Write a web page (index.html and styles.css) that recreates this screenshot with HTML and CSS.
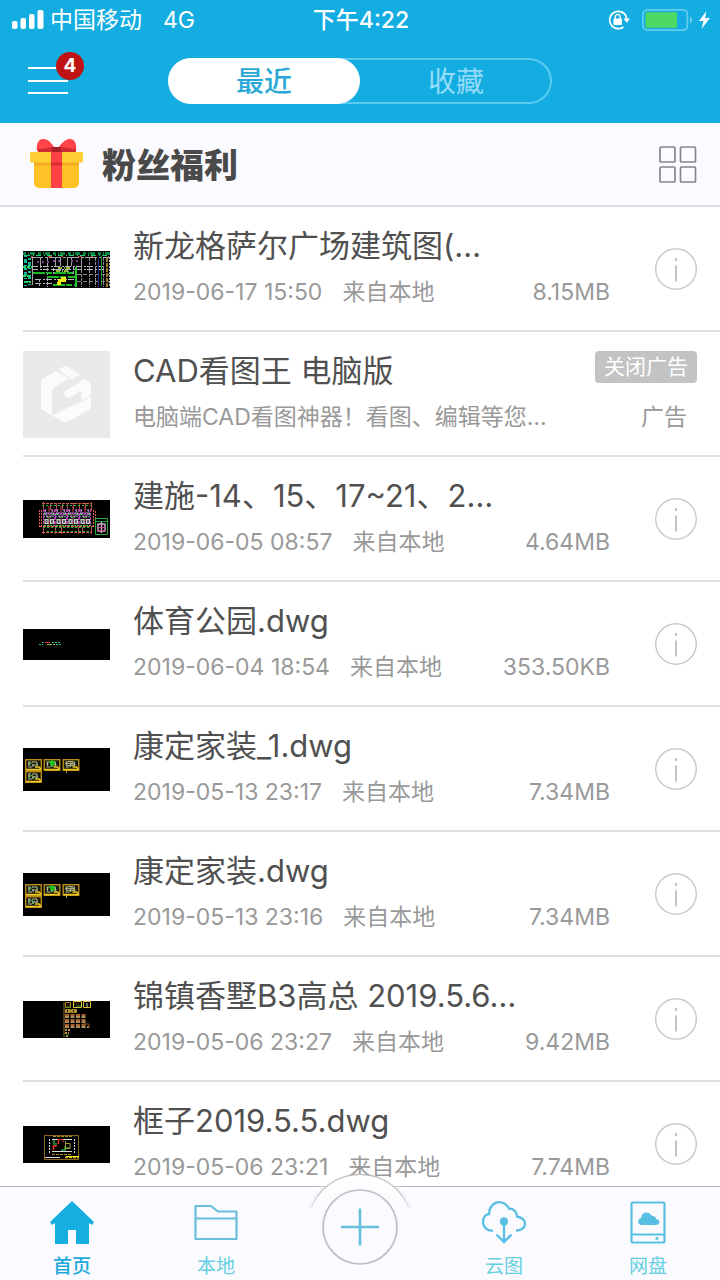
FILE: index.html
```html
<!DOCTYPE html>
<html lang="zh-CN">
<head>
<meta charset="utf-8">
<meta name="viewport" content="width=device-width, initial-scale=1">
<title>CAD看图王</title>
<link rel="stylesheet" href="styles.css">
</head>
<body>
<svg class="defs" aria-hidden="true">
  <symbol id="info" viewBox="0 0 42 42">
    <circle cx="21" cy="21" r="20.3" fill="none" stroke="#c8c8c8" stroke-width="1.4"/>
    <path d="M21 10v3M21 17.500v16" stroke="#bdbdbd" stroke-width="1.8"/>
  </symbol>
  <symbol id="plan" viewBox="0 0 17 12">
    <rect x=".7" y=".7" width="15.600" height="10.600" fill="#15170c" stroke="#c4951a" stroke-width="1.300"/>
    <path d="M3 3h3m1 0h5M3 5h2m2 1h6M3 8h4m1-3v3M12 3v4M4 3v4" stroke="#b5bd96" stroke-width="1.100"/>
    <path d="M1 10.500h15M10 8h4l2 2" stroke="#f0c820" stroke-width="1.400" fill="none"/>
  </symbol>
  <symbol id="house-plans" viewBox="0 0 87 43">
    <rect width="87" height="43" fill="#000"/>
    <use href="#plan" x="2" y="11" width="17" height="12"/>
    <use href="#plan" x="20" y="11" width="18" height="12"/>
    <use href="#plan" x="39" y="11" width="18" height="12"/>
    <use href="#plan" x="2" y="23" width="17" height="12"/>
    <path d="M26 14h6M27 16h5M29 12v7" stroke="#18d818" stroke-width="1.300"/>
    <path d="M43.500 23v2" stroke="#b6951d"/>
    <path d="M42 15.500h10M43 17.500h9M45 13.500h5" stroke="#a9aa79"/>
    <path d="M6 17l4-3M5 29l5-2M9 31l3-3" stroke="#5dbc5c"/>
  </symbol>
  <symbol id="villa" viewBox="0 0 12 21">
    <path d="M.5 3v17M11.500 3v17" stroke="#b13e9c" stroke-dasharray="3 1"/>
    <path d="M6 0v20" stroke="#c04a55"/>
    <path d="M1 4.500h3M8 4.500h3M2 7.500h8M0 10.500h12" stroke="#8e6fd0" stroke-width="1.500" stroke-dasharray="2 1"/>
    <path d="M3 3l-2 6M9 3l2 6M4 6v5M8 6v5" stroke="#c68ac6"/>
    <path d="M2 13.500h3v4H2zM7.500 13.500h3v4h-3z" stroke="#d0d0d6" fill="#5b5564" stroke-width="1.200"/>
    <path d="M1 8.500h2M9 8.500h2M4 11.500h4M1 19.500h10" stroke="#2ed538" stroke-dasharray="2 1"/>
  </symbol>
</svg>

<div class="app">
  <header class="header">
    <div class="status">
      <div class="status-left">
        <svg class="signal" viewBox="0 0 32 20" fill="#fff" aria-hidden="true"><rect y="11" width="5.500" height="8" rx="2"/><rect x="8.500" y="8" width="5.500" height="11" rx="2"/><rect x="17" y="4" width="5.500" height="15" rx="2"/><rect x="25.500" y="0" width="6" height="19" rx="2"/></svg>
        <span class="carrier">中国移动</span>
        <span>4G</span>
      </div>
      <time class="clock">下午4:22</time>
      <div class="status-right">
        <svg class="lock" viewBox="0 0 22 20" aria-hidden="true"><path d="M15.500 3A8.700 8.700 0 1 0 15.500 17" fill="none" stroke="#fff" stroke-width="1.700"/><path d="M13.600 1.900A8.700 8.700 0 0 1 18.700 9" fill="none" stroke="#fff" stroke-width="1.700"/><path d="M15.500 8.500H22L18.700 13z" fill="#fff"/><rect x="5.500" y="8.500" width="8.500" height="6.500" rx="1" fill="#fff"/><path d="M7.300 9V6.800a2.400 2.400 0 0 1 4.800 0V9" fill="none" stroke="#fff" stroke-width="1.400"/></svg>
        <svg class="battery" viewBox="0 0 52 22" aria-hidden="true"><rect x=".9" y=".9" width="44.500" height="20.200" rx="4.500" fill="none" stroke="#65ccf0" stroke-width="1.700"/><rect x="3.500" y="3.200" width="31.500" height="15.500" rx="1.500" fill="#4cd964"/><path d="M48 7.500c3 1 3 6 0 7z" fill="#65ccf0"/></svg>
        <svg class="bolt" viewBox="0 0 11 18" fill="#fff" aria-hidden="true"><path d="M7.500 0 0 10h4.500L2.500 18 11 7H6z"/></svg>
      </div>
    </div>
    <nav class="topnav">
      <button class="menu" type="button" aria-label="菜单">
        <svg viewBox="0 0 40 28" stroke="#fff" stroke-width="2" aria-hidden="true"><path d="M0 1h40M0 14h40M0 26h40"/></svg>
        <span class="badge">4</span>
      </button>
      <div class="segment">
        <button class="segment-item active" type="button">最近</button>
        <button class="segment-item" type="button">收藏</button>
      </div>
    </nav>
  </header>

  <section class="promo">
    <svg class="gift" viewBox="0 0 53 50" aria-hidden="true">
      <path d="M4 22h45v22a5 5 0 0 1-5 5H9a5 5 0 0 1-5-5z" fill="#ffc328"/>
      <path d="M7 12C6 4 9 0 13 0c6 0 9 5 11 8h5c2-3 6-8 11-8 5 0 7 5 6 12z" fill="#ff4348"/>
      <path d="M8 10c5 0 12-2 16-2h5c5 0 11 2 17 2v3H8z" fill="#d02c34"/>
      <path d="M22 8h9v5h-9z" fill="#a81f28"/>
      <rect y="13" width="53" height="10.500" rx="1.500" fill="#ffce32"/>
      <path d="M4 23.500h45v3H4z" fill="#f5ad22"/>
      <path d="M21 13h11v36H21z" fill="#ff4145"/><path d="M21 23.500h11v3H21z" fill="#d92b31"/>
    </svg>
    <h1 class="promo-title">粉丝福利</h1>
    <button class="grid-button" type="button" aria-label="网格视图">
      <svg viewBox="0 0 38 38" fill="none" stroke="#858590" stroke-width="1.700" aria-hidden="true"><rect x="1" y="2" width="15" height="15" rx="1"/><rect x="21.500" y="2" width="15" height="15" rx="1"/><rect x="1" y="22" width="15" height="15" rx="1"/><rect x="21.500" y="22" width="15" height="15" rx="1"/></svg>
    </button>
  </section>

  <main class="list">
    <article class="row">
      <svg class="thumb" viewBox="0 0 87 37" shape-rendering="crispEdges" fill="none" aria-hidden="true">
        <rect width="87" height="37" fill="#000"/>
        <path d="M0 2h87" stroke="#078541" stroke-width="3" stroke-dasharray="3 2 1 1 5 3"/>
        <path d="M2 4h82" stroke="#19d26b" stroke-dasharray="5 3 1 2"/>
        <path d="M8 6h78" stroke="#aaa" stroke-dasharray="12 2 3 1"/>
        <path d="M8 5h78" stroke="#d23838" stroke-dasharray="2 15 4 9"/>
        <path d="M2 4v31M6 7v27" stroke="#17b8a0" stroke-width="3" stroke-dasharray="2 2 4 2 1 2"/>
        <path d="M0 16h10M0 25h8M2 31h6" stroke="#1ce055" stroke-width="2" stroke-dasharray="3 1"/>
        <path d="M9 7v27M17 7v10M24 7v9M32 6v9M37 7v8M44 7v8M48 7v8M58 6v9" stroke="#a1a1a1"/>
        <path d="M9 15h76M9 18h76M12 28h40M12 32h18" stroke="#bbb" stroke-dasharray="6 2 2 1"/>
        <path d="M14 11h13M30 10h10M48 10h8" stroke="#77409a" stroke-width="2" stroke-dasharray="2 3"/>
        <path d="M24 17v8M30 17v6M37 17v6M45 16v7M50 16v8M16 28v8M24 27v9" stroke="#b0a8c8" stroke-dasharray="3 1"/>
        <path d="M10 22h41M24 26h28M30 34h23" stroke="#1bb724" stroke-width="2" stroke-dasharray="12 1 6 2"/>
        <path d="M53 16v20" stroke="#24c436" stroke-width="2"/>
        <path d="M35 17h13M33 20h13" stroke="#91ba35" stroke-width="2" stroke-dasharray="4 2 1 1"/>
        <path d="M35 29h8M38 27h5M34 32h4" stroke="#f0ec16" stroke-width="3"/>
        <path d="M58 7v29M66 7v29M72 7v29M80 7v29" stroke="#8e8e9d" stroke-dasharray="3 1"/>
        <path d="M54 23h32M54 30h32" stroke="#888" stroke-dasharray="4 2"/>
        <path d="M75 8v28" stroke="#2c2b99"/><path d="M78 5v30" stroke="#209737"/>
        <path d="M84 7v29" stroke="#a07f2a" stroke-width="2" stroke-dasharray="4 1"/><path d="M86 6v30" stroke="#bbb" stroke-dasharray="2 1"/>
      </svg>
      <div class="row-body">
        <h2 class="title">新龙格萨尔广场建筑图(…</h2>
        <p class="meta"><span>2019-06-17 15:50</span><span>来自本地</span><span class="size">8.15MB</span></p>
      </div>
      <button class="info" type="button" aria-label="详情"><svg><use href="#info"/></svg></button>
    </article>

    <article class="row ad">
      <svg class="thumb" viewBox="0 0 87 87" aria-hidden="true">
        <rect width="87" height="87" fill="#e9e9e9"/>
        <g fill="#fbfbfb" stroke="#fbfbfb" stroke-linejoin="round">
          <path d="M18.500 31Q18.500 29 20 28L33 20.500 45 27.500 31 36 28.500 40V63.500L20 59Q18.500 58 18.500 56z"/>
          <path d="M36.500 18.500 41 16Q43 15.300 45 16L56.500 23.500 48 28z"/>
          <path d="M30 64.500 42 58.500 67.500 46.500V55Q67.500 57 66 58L46 70Q43 71.500 40 70z"/>
          <path d="M58.500 29.500 60.500 28.500 66.500 32Q67.500 33 67.500 35V44L59 48.500z"/>
          <path d="M45.500 42.500 57 36" fill="none" stroke-width="8" stroke-linecap="round"/>
        </g>
      </svg>
      <div class="row-body">
        <h2 class="title">CAD看图王 电脑版</h2>
        <p class="meta">电脑端CAD看图神器！看图、编辑等您…</p>
      </div>
      <div class="ad-side">
        <button class="close-ad" type="button">关闭广告</button>
        <span class="ad-label">广告</span>
      </div>
    </article>

    <article class="row">
      <svg class="thumb" viewBox="0 0 87 38" fill="none" aria-hidden="true">
        <rect width="87" height="38" fill="#000"/>
        <path d="M19 3.500h50M16 26.500h54M19 32.500h50" stroke="#e0604e" stroke-dasharray="3 1"/>
        <path d="M20.500 2v9M27.500 3v7M33.500 3v7M39.500 3v7M44.500 3v7M50.500 3v7M56.500 3v7M62.500 3v7M68.500 2v9M20.500 27v7M32.500 27v7M38.500 27v7M55.500 27v7M59.500 27v7M68.500 27v7" stroke="#bd4d46"/>
        <path d="M16.500 10v17M18.500 10v16M70.500 10v17M72.500 11v15" stroke="#e05c50" stroke-dasharray="2 1"/>
        <path d="M19 5.500h49M20 27.500h49M24 31.500h42" stroke="#22bd2a" stroke-dasharray="2 2"/>
        <use href="#villa" x="20" y="6" width="12" height="21"/><use href="#villa" x="32" y="6" width="12" height="21"/><use href="#villa" x="44" y="6" width="12" height="21"/><use href="#villa" x="56" y="6" width="12" height="21"/>
        <path d="M72.500 18.500h12v16h-12zM72 21.500h13" stroke="#2ea834"/><path d="M75 24h7v7h-7zM78.500 22v11" stroke="#c9a8c9" stroke-width="1.500"/><path d="M74 30.500h9M76 27.500h6" stroke="#c94f83"/>
      </svg>
      <div class="row-body">
        <h2 class="title">建施-14、15、17~21、2…</h2>
        <p class="meta"><span>2019-06-05 08:57</span><span>来自本地</span><span class="size">4.64MB</span></p>
      </div>
      <button class="info" type="button" aria-label="详情"><svg><use href="#info"/></svg></button>
    </article>

    <article class="row">
      <svg class="thumb" viewBox="0 0 87 31" fill="none" aria-hidden="true">
        <rect width="87" height="31" fill="#000"/>
        <path d="M16 15.500h4M25 15.500h4M33 15.500h6" stroke="#1fc878" stroke-dasharray="2 1"/><path d="M19 13.500h5M29 13.500h8" stroke="#2bc195" stroke-dasharray="2 1"/><path d="M22 13.500h5" stroke="#d64128"/><path d="M24 15.500h9" stroke="#b1af45" stroke-dasharray="2 1"/>
      </svg>
      <div class="row-body">
        <h2 class="title">体育公园.dwg</h2>
        <p class="meta"><span>2019-06-04 18:54</span><span>来自本地</span><span class="size">353.50KB</span></p>
      </div>
      <button class="info" type="button" aria-label="详情"><svg><use href="#info"/></svg></button>
    </article>

    <article class="row">
      <svg class="thumb" viewBox="0 0 87 43" aria-hidden="true"><use href="#house-plans"/></svg>
      <div class="row-body">
        <h2 class="title">康定家装_1.dwg</h2>
        <p class="meta"><span>2019-05-13 23:17</span><span>来自本地</span><span class="size">7.34MB</span></p>
      </div>
      <button class="info" type="button" aria-label="详情"><svg><use href="#info"/></svg></button>
    </article>

    <article class="row">
      <svg class="thumb" viewBox="0 0 87 43" aria-hidden="true"><use href="#house-plans"/></svg>
      <div class="row-body">
        <h2 class="title">康定家装.dwg</h2>
        <p class="meta"><span>2019-05-13 23:16</span><span>来自本地</span><span class="size">7.34MB</span></p>
      </div>
      <button class="info" type="button" aria-label="详情"><svg><use href="#info"/></svg></button>
    </article>

    <article class="row">
      <svg class="thumb" viewBox="0 0 87 37" fill="none" aria-hidden="true">
        <rect width="87" height="37" fill="#000"/>
        <path d="M41 1v35" stroke="#866c24"/>
        <path d="M42.500 1.500h5v5h-5zM42.500 8.500h5v3h-5zM48.500 8.500h5v3h-5z" stroke="#a8851d"/>
        <path d="M50.500 .5h8v6h-8zM60.500 .5h7v6h-7z" stroke="#e0c33b"/>
        <path d="M51 3h6M44 4h4" stroke="#c43728" stroke-dasharray="1 1"/><path d="M53 5h5M44 6h3" stroke="#2ca436"/><path d="M64 2v4" stroke="#d9d9ca"/>
        <path d="M42 14h22M42 19h22M42 24h22" stroke="#ab5e2d" stroke-width="2" stroke-dasharray="4 1.500"/>
        <path d="M42 16h22M42 21h22M42 26h24" stroke="#e1c078" stroke-width="1.500" stroke-dasharray="4 1.500"/>
        <path d="M42 10h11M42 29h5M42 32h4M43 35h3" stroke="#bd9938" stroke-width="2" stroke-dasharray="2 1"/>
        <path d="M60 23h6v4" stroke="#924d21"/><path d="M43 34h3" stroke="#168d36"/>
      </svg>
      <div class="row-body">
        <h2 class="title">锦镇香墅B3高总 2019.5.6…</h2>
        <p class="meta"><span>2019-05-06 23:27</span><span>来自本地</span><span class="size">9.42MB</span></p>
      </div>
      <button class="info" type="button" aria-label="详情"><svg><use href="#info"/></svg></button>
    </article>

    <article class="row">
      <svg class="thumb" viewBox="0 0 87 37" fill="none" aria-hidden="true">
        <rect width="87" height="37" fill="#000"/>
        <path d="M21.500 9.500h34v24h-34z" stroke="#8d651c"/>
        <path d="M26.500 13v14M51.500 13v14" stroke="#ddd" stroke-dasharray="2 1"/><path d="M29 13.500h20M29 25.500h20M22 31.500h15" stroke="#ddd"/>
        <path d="M30.500 19v5M35.500 13v5M31 20h3" stroke="#e83027" stroke-width="1.500"/><path d="M36 13.500h4v3" stroke="#e13524"/>
        <path d="M31 14v4h3M38 24h4v-4M43 22h4" stroke="#1f9d36" stroke-width="1.500"/><path d="M42.500 15v9M42 17.500h5v5h-5" stroke="#a29c2e"/>
        <path d="M30 10.500h20M29 28.500h20" stroke="#a98f22" stroke-dasharray="3 1"/><path d="M42 31.500h14" stroke="#d4b722" stroke-width="1.500" stroke-dasharray="3 1"/><path d="M43 30.500h13" stroke="#fff21e"/>
      </svg>
      <div class="row-body">
        <h2 class="title">框子2019.5.5.dwg</h2>
        <p class="meta"><span>2019-05-06 23:21</span><span>来自本地</span><span class="size">7.74MB</span></p>
      </div>
      <button class="info" type="button" aria-label="详情"><svg><use href="#info"/></svg></button>
    </article>
  </main>

  <nav class="tabbar">
    <a class="tab active" href="#home">
      <svg viewBox="0 0 44 44" aria-hidden="true"><path d="M22 0 44 21l-2 3-3-2v21H26V29h-8v14H5V22l-3 2-2-3z" fill="#16ade1"/></svg>
      <span>首页</span>
    </a>
    <a class="tab" href="#local">
      <svg viewBox="0 0 44 44" fill="none" stroke="#68bedb" stroke-width="2.200" stroke-linejoin="round" aria-hidden="true"><path d="M1.500 5H17l7 5.500h18.500V38h-41zM1.500 17.500h41"/></svg>
      <span>本地</span>
    </a>
    <button class="add" type="button" aria-label="新建">
      <svg viewBox="0 0 110 106" aria-hidden="true">
        <defs>
          <linearGradient id="bump" x1="0" y1="0" x2="0" y2="1"><stop offset="0" stop-color="#fff"/><stop offset=".35" stop-color="#fafaff"/></linearGradient>
          <linearGradient id="rim" gradientUnits="userSpaceOnUse" x1="0" y1="0" x2="0" y2="38"><stop offset="0" stop-color="#bbb"/><stop offset=".6" stop-color="#ccc"/><stop offset="1" stop-color="#ddd" stop-opacity="0"/></linearGradient>
          <radialGradient id="shade" gradientUnits="userSpaceOnUse" cx="55" cy="53" r="58"><stop offset=".86" stop-color="#d8d8dc" stop-opacity=".7"/><stop offset="1" stop-color="#fafaff" stop-opacity="0"/></radialGradient>
        </defs>
        <path d="M0 12h110v22H0z" fill="url(#shade)"/>
        <circle cx="55" cy="53" r="52" fill="url(#bump)"/>
        <path d="M5 38A52 52 0 0 1 105 38" fill="none" stroke="url(#rim)" stroke-width="1.200"/>
        <circle cx="55" cy="53" r="37" fill="#fafaff" stroke="#bdbdc5" stroke-width="1.700"/>
        <path d="M36 53h38M55 34.500v37" stroke="#68bedb" stroke-width="2.600"/>
      </svg>
    </button>
    <a class="tab" href="#cloud">
      <svg viewBox="0 0 44 44" fill="none" stroke="#58bfe3" stroke-width="2.300" aria-hidden="true"><path d="M11 29.500C5 30 1 26 1 21c0-5 3-8 6-8C7 6 12 1.200 17 1.200c5 0 8 3 10 6.300 5 0 8 4 8 8 5 1 8 4 8 7.500 0 4-4 6.500-9 6.500"/><circle cx="22" cy="20.500" r="3" fill="#58bfe3"/><path d="M22 20v20M14.500 33.500 22 41l7.500-7.500"/></svg>
      <span>云图</span>
    </a>
    <a class="tab" href="#disk">
      <svg viewBox="0 0 44 44" fill="none" stroke="#58bfe3" stroke-width="2.200" aria-hidden="true"><rect x="5.500" y="1.500" width="33" height="40" rx="1.500"/><path d="M5.500 33.500h33"/><path d="M16 24c-5 0-5-6-1-7 1-7 8-7 11-2 3 0 4 1 4 3 5 1 4 6 0 6z" fill="#58bfe3" stroke="none"/><path d="M29.500 37.500h3" stroke-width="2.500"/></svg>
      <span>网盘</span>
    </a>
  </nav>
</div>
</body>
</html>
```

FILE: styles.css
```css
* { box-sizing: border-box; }

body {
  margin: 0;
  background: #fff;
  color: #505050;
  font-family: Inter, "Noto Sans CJK SC", sans-serif;
}

h1, h2, p { margin: 0; font-weight: 400; }

button {
  margin: 0;
  padding: 0;
  border: 0;
  background: none;
  color: inherit;
  font: inherit;
}

a { color: inherit; text-decoration: none; }
svg { display: block; flex: none; }
.defs { position: absolute; width: 0; height: 0; }

.app {
  display: flex;
  flex-direction: column;
  height: 100vh;
}

/* Header */
.header { flex: none; background: #14ade1; color: #fff; }

.status {
  display: grid;
  grid-template-columns: 1fr auto 1fr;
  align-items: center;
  height: 40px;
  padding: 0 10px 0 12px;
  font-size: 23px;
  line-height: 40px;
}

.status-left, .status-right { display: flex; align-items: center; }
.status-right { justify-content: flex-end; }
.signal { width: 32px; height: 20px; margin-right: 6px; }
.carrier { margin-right: 21px; }
.clock { font-weight: 500; }
.lock { width: 22px; height: 20px; margin-right: 12px; }
.battery { width: 52px; height: 22px; margin-right: 5px; }
.bolt { width: 11px; height: 18px; }

.topnav {
  display: grid;
  grid-template-columns: 1fr minmax(0, 384px) 1fr;
  padding: 18px 28px 19px;
}

.menu { position: relative; justify-self: start; align-self: center; }
.menu svg { width: 40px; height: 28px; }

.badge {
  position: absolute;
  top: -15px;
  left: 28px;
  width: 28px;
  height: 28px;
  border-radius: 50%;
  background: #c01315;
  font-size: 19px;
  font-weight: 700;
  line-height: 28px;
}

.segment {
  display: grid;
  grid-template-columns: 1fr 1fr;
  height: 46px;
  border-radius: 23px;
  box-shadow: inset 0 0 0 2px #5bcbf2;
  color: #94dcf7;
  font-size: 28px;
  line-height: 46px;
}

.segment-item { padding-top: 2px; border-radius: 23px; line-height: 44px; }
.segment-item.active { background: #fff; color: #2ba9d6; font-weight: 500; }

/* Promotion strip */
.promo {
  display: flex;
  flex: none;
  align-items: center;
  height: 84px;
  padding: 0 23px 0 30px;
  border-bottom: 2px solid #dddde3;
  background: #fafaff;
}

.gift { width: 53px; height: 50px; }

.promo-title {
  flex: 1;
  padding-top: 3px;
  margin-left: 19px;
  color: #4a4a4a;
  font-size: 34px;
  font-weight: 900;
  line-height: 48px;
}

.grid-button svg { width: 38px; height: 38px; }

/* File list */
.list {
  flex: 1;
  min-height: 0;
  padding-left: 23px;
  overflow-y: auto;
  scrollbar-width: none;
}

.row {
  display: flex;
  align-items: center;
  padding: 16px 23px 15px 0;
  border-bottom: 2px solid #dfdfdf;
}

.thumb { width: 87px; margin: -8px 23px -8px 0; }
.row-body { flex: 1; min-width: 0; }

.title, .meta {
  overflow: hidden;
  text-overflow: ellipsis;
  white-space: nowrap;
}

.title { font-size: 31px; line-height: 46px; }

.meta {
  display: flex;
  gap: 20px;
  color: #999;
  font-size: 23px;
  line-height: 46px;
}

.size { margin-left: auto; }
.info { margin-left: 45px; }
.info svg { width: 42px; height: 42px; }

.ad-side {
  display: flex;
  flex-direction: column;
  align-items: flex-end;
  padding-top: 3px;
}

.close-ad {
  width: 102px;
  height: 32px;
  border-radius: 4px;
  background: #c3c3c3;
  color: #fff;
  font-size: 21px;
  line-height: 30px;
}

.ad-label {
  padding-right: 10px;
  margin-top: 11px;
  color: #999;
  font-size: 23px;
  line-height: 46px;
}

/* Bottom tabs */
.tabbar {
  position: relative;
  display: grid;
  flex: none;
  grid-template-columns: repeat(5, 1fr);
  height: 94px;
  border-top: 1px solid #b8b8bc;
  background: #fafaff;
  color: #65cfe0;
  font-size: 19px;
  line-height: 26px;
}

.tab {
  display: flex;
  flex-direction: column;
  align-items: center;
  gap: 9px;
  padding-top: 14px;
}

.tab.active { color: #20a9d8; font-weight: 500; }
.tab svg { width: 44px; height: 44px; }
.add { display: flex; align-items: flex-end; justify-content: center; height: 93px; }
.add svg { width: 110px; height: 106px; }
```
